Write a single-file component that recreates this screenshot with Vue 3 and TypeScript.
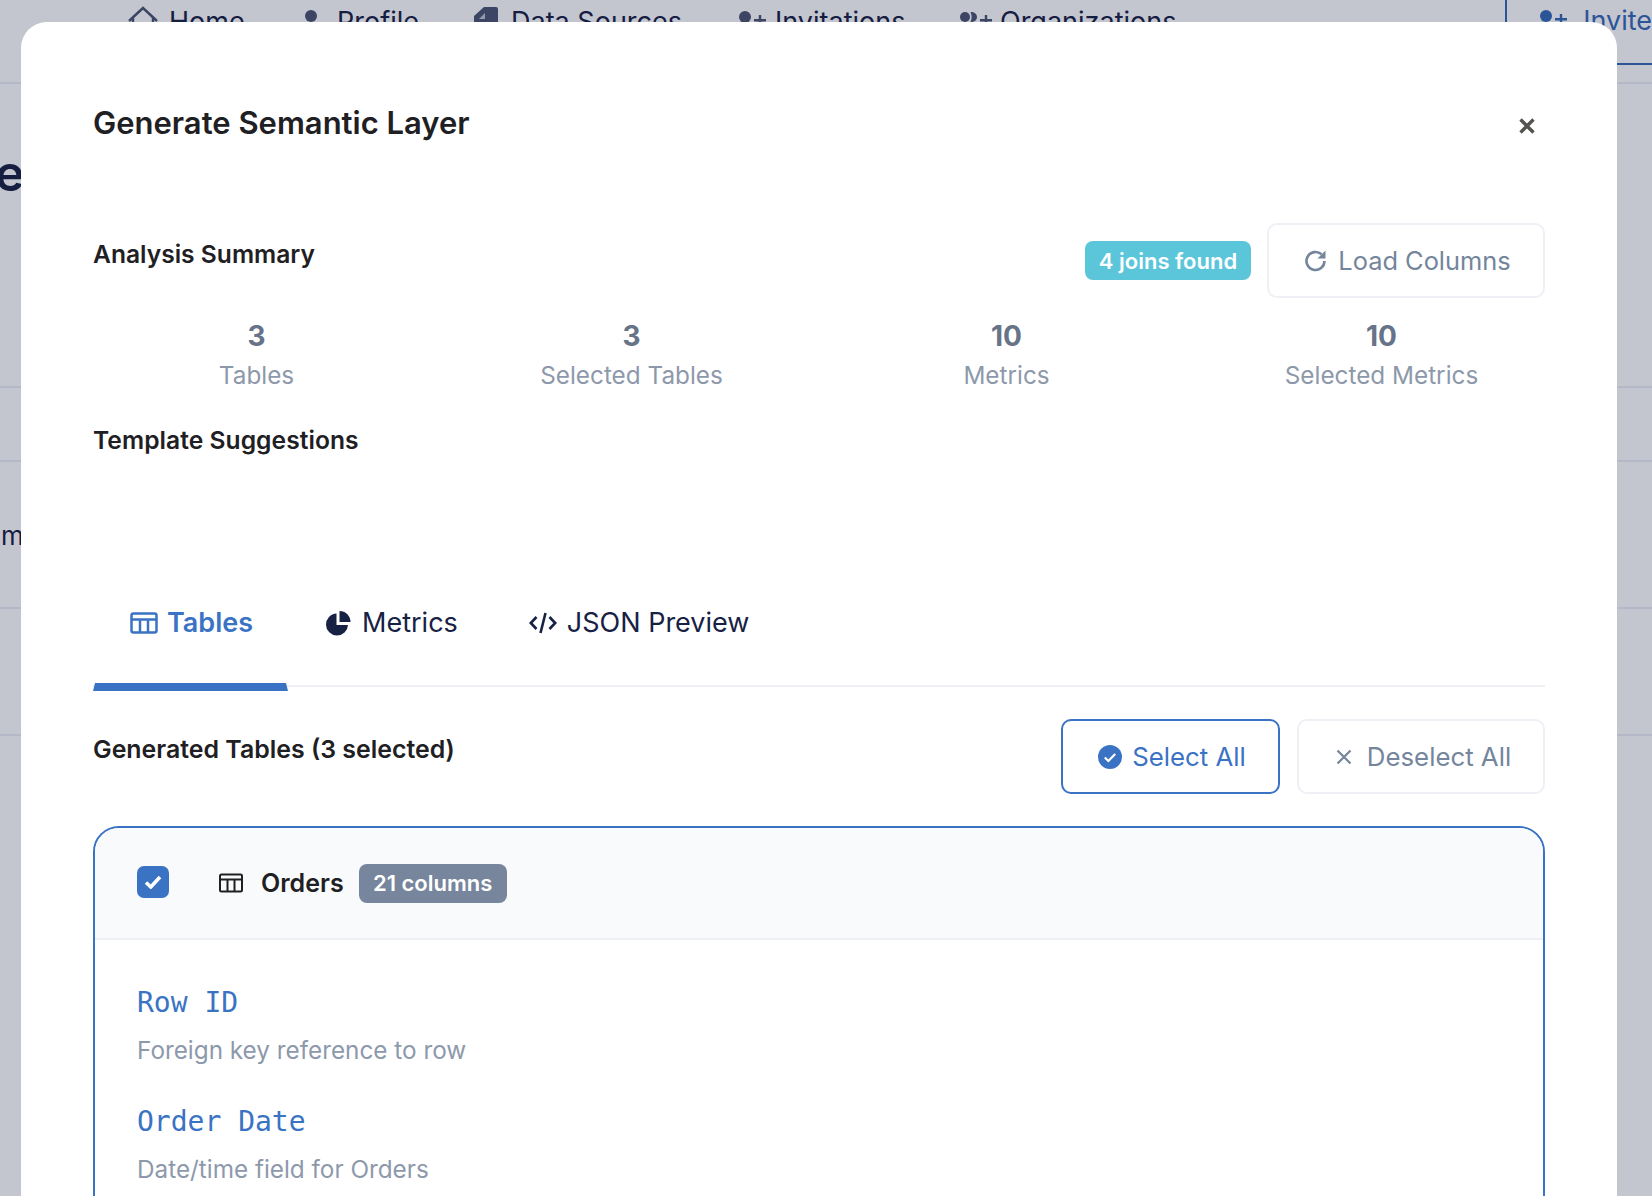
<script setup lang="ts">
interface Stat { value: number; label: string }
interface Field { name: string; desc: string }
const navItems: { label: string; icon: string }[] = [
  { label: 'Home', icon: 'home' },
  { label: 'Profile', icon: 'user' },
  { label: 'Data Sources', icon: 'doc' },
  { label: 'Invitations', icon: 'invite' },
  { label: 'Organizations', icon: 'org' },
]
const stats: Stat[] = [
  { value: 3, label: 'Tables' },
  { value: 3, label: 'Selected Tables' },
  { value: 10, label: 'Metrics' },
  { value: 10, label: 'Selected Metrics' },
]
const fields: Field[] = [
  { name: 'Row ID', desc: 'Foreign key reference to row' },
  { name: 'Order Date', desc: 'Date/time field for Orders' },
]
</script>

<template>
  <div class="page">
    <header class="topbar">
      <nav class="nav">
        <a v-for="item in navItems" :key="item.label" class="nav-item" :class="'nav-' + item.icon">
          <svg v-if="item.icon === 'home'" class="nav-ic" width="32" height="32" viewBox="0 0 32 32" fill="none" stroke="#4b5470" stroke-width="2.4"><path d="M2 16 16 3l14 13M6 13v16h20V13" /></svg>
          <svg v-else-if="item.icon === 'user'" class="nav-ic" width="16" height="32" viewBox="0 0 16 32" fill="#4b5470"><circle cx="8" cy="11" r="6" /></svg>
          <svg v-else-if="item.icon === 'doc'" class="nav-ic" width="24" height="32" viewBox="0 0 24 32" fill="#4b5470"><path d="M10 2h12a2 2 0 0 1 2 2v28H0V11z" /><path d="M11 8v6H5z" fill="#c3c5cf" /></svg>
          <svg v-else-if="item.icon === 'invite'" class="nav-ic" width="28" height="32" viewBox="0 0 28 32" fill="#4b5470"><circle cx="6" cy="12" r="6" /><path d="M15 14h12v2.400H15zM19.800 10h2.400v12h-2.400z" /></svg>
          <svg v-else class="nav-ic" width="32" height="32" viewBox="0 0 32 32" fill="#4b5470"><circle cx="5" cy="12" r="5" /><path d="M10.500 7c4 0 6.500 2 6.500 5s-2.500 5-6.500 5c1.500-3 1.500-7 0-10z" /><path d="M20 14h12v2.400H20zM24.800 10h2.400v12h-2.400z" /></svg>
          <span>{{ item.label }}</span>
        </a>
      </nav>
      <a class="invite">
        <svg width="28" height="32" viewBox="0 0 28 32" fill="#3569b5"><circle cx="6" cy="12" r="6" /><path d="M15 14h12v2.400H15zM19.800 10h2.400v12h-2.400z" /></svg>
        <span>Invite</span>
      </a>
    </header>
    <div class="bg-row bg-heading"><span>e</span></div>
    <div class="bg-row bg-b"></div>
    <div class="bg-row bg-m"><span>m</span></div>
    <div class="bg-row bg-d"></div>

    <div class="scrim"></div>

    <section class="modal">
      <div class="modal-head">
        <h2>Generate Semantic Layer</h2>
        <svg class="close" width="16" height="16" viewBox="0 0 16 16" fill="none" stroke="#55534f" stroke-width="3.400"><path d="M1.500 1.500l13 13M14.500 1.500l-13 13" /></svg>
      </div>

      <div class="summary-head">
        <h3>Analysis Summary</h3>
        <div class="summary-actions">
          <span class="badge badge-info">4 joins found</span>
          <button class="btn btn-load">
            <svg width="24" height="24" viewBox="0 0 24 24" fill="none"><path d="M20.500 12a9 9 0 1 1-3-6.700" stroke="#74859c" stroke-width="2.600" /><path d="M21.500 1.500v8h-8z" fill="#74859c" /></svg>
            Load Columns
          </button>
        </div>
      </div>

      <div class="stats">
        <div v-for="s in stats" :key="s.label" class="stat">
          <div class="stat-value">{{ s.value }}</div>
          <div class="stat-label">{{ s.label }}</div>
        </div>
      </div>

      <h3 class="suggest">Template Suggestions</h3>

      <div class="tabs">
        <a class="tab active">
          <svg width="28" height="24" viewBox="0 0 28 24" fill="none" stroke="#3a73c4" stroke-width="2.500"><rect x="1.500" y="2.500" width="25" height="19" rx="2" /><path d="M1.500 8.500h25M10 8.500v13M18 8.500v13" /></svg>
          Tables
        </a>
        <a class="tab tab-metrics">
          <svg width="26" height="26" viewBox="0 0 26 26" fill="#172144"><path d="M11.500 3.500A11 11 0 1 0 23 15H11.500z" /><path d="M14.500 1v11H25.500A11 11 0 0 0 14.500 1z" /></svg>
          Metrics
        </a>
        <a class="tab">
          <svg width="28" height="24" viewBox="0 0 28 24" fill="none" stroke="#172144" stroke-width="2.600"><path d="M7.500 6 1.800 12l5.700 6M20.500 6l5.700 6-5.700 6M16.500 2l-5 20" /></svg>
          JSON Preview
        </a>
      </div>

      <div class="generated-head">
        <h3>Generated Tables (3 selected)</h3>
        <div class="generated-actions">
          <button class="btn btn-select">
            <svg width="24" height="24" viewBox="0 0 24 24"><circle cx="12" cy="12" r="12" fill="#3a73c4" /><path d="M6.800 12.500l3.600 3.500 6.800-7" fill="none" stroke="#fff" stroke-width="2.200" /></svg>
            Select All
          </button>
          <button class="btn btn-deselect">
            <svg width="16" height="16" viewBox="0 0 16 16" fill="none" stroke="#74859c" stroke-width="2.200"><path d="M1.500 1.500l13 13M14.500 1.500l-13 13" /></svg>
            Deselect All
          </button>
        </div>
      </div>

      <article class="card">
        <div class="card-head">
          <span class="check">
            <svg width="18" height="14" viewBox="0 0 18 14" fill="none" stroke="#fff" stroke-width="3.600"><path d="M2 7.500l4.800 4.500L16 2" /></svg>
          </span>
          <svg class="card-ic" width="24" height="20" viewBox="0 0 24 20" fill="none" stroke="#1f2023" stroke-width="2"><rect x="1" y="1.500" width="22" height="17" rx="1.500" /><path d="M1 6.500h22M8.500 6.500v12M15.500 6.500v12" /></svg>
          <span class="card-title">Orders</span>
          <span class="badge badge-muted">21 columns</span>
        </div>
        <div class="card-body">
          <div v-for="f in fields" :key="f.name" class="field">
            <code>{{ f.name }}</code>
            <p>{{ f.desc }}</p>
          </div>
        </div>
      </article>
    </section>
  </div>
</template>

<style>
html, body { margin: 0; }
</style>

<style scoped>
.page { position: relative; width: 1652px; height: 1196px; overflow: hidden; background: #fff; font-family: Inter, "Noto Sans", sans-serif; color: #1f2023; }
.topbar { display: flex; height: 84px; box-sizing: border-box; border-bottom: 2px solid #eceef3; }
.nav { display: flex; padding-left: 127px; width: 1506px; box-sizing: border-box; }
.nav-item { display: flex; height: 42px; align-items: center; font-size: 27px; color: #16203f; gap: 10px; }
.nav-home { width: 176px; }
.nav-user { width: 171px; gap: 18px; }
.nav-doc { width: 265px; gap: 13px; }
.nav-invite { width: 221px; gap: 8px; }
.nav-org { gap: 8px; }
.nav-ic { flex: none; }
.invite { flex: 1; display: flex; align-items: center; gap: 15px; height: 65px; padding-bottom: 23px; box-sizing: border-box; padding-left: 33px; border-left: 2px solid #3569b5; border-bottom: 2px solid #3569b5; font-size: 27px; color: #3569b5; }
.bg-row { border-bottom: 2px solid #eceef3; box-sizing: border-box; overflow: hidden; }
.bg-row span { display: block; }
.bg-heading { height: 304px; padding-top: 58px; font-size: 50px; font-weight: 600; line-height: 62px; color: #16203f; }
.bg-heading span { margin-left: -5px; }
.bg-b { height: 74px; }
.bg-m { height: 147px; padding-top: 56px; padding-left: 1px; font-size: 26px; line-height: 36px; color: #16203f; }
.bg-d { height: 127px; }
.scrim { position: absolute; inset: 0; background: rgba(18, 26, 65, 0.253); }

.modal { position: absolute; left: 21px; top: 22px; width: 1596px; height: 1400px; box-sizing: border-box; padding: 0 72px; background: #fff; border-radius: 26px; }
.modal-head { display: flex; justify-content: space-between; align-items: center; height: 40px; padding-top: 81px; }
h2 { margin: 0; font-size: 31px; font-weight: 600; line-height: 40px; }
.close { margin-right: 10px; margin-top: 6px; }
h3 { margin: 0; font-size: 24.6px; font-weight: 600; line-height: 32px; color: #1f2023; }
.summary-head { display: flex; justify-content: space-between; margin-top: 80px; }
.summary-head h3 { margin-top: 15px; }
.summary-actions { display: flex; align-items: center; gap: 16px; }
.badge { display: inline-block; font-weight: 600; color: #fff; border-radius: 8px; box-sizing: border-box; text-align: center; }
.badge-info { width: 166px; height: 39px; line-height: 41px; font-size: 22px; background: #5bc6da; }
.btn { display: inline-flex; align-items: center; justify-content: center; gap: 10px; height: 75px; box-sizing: border-box; border: 2px solid #eff0f5; border-radius: 10px; background: #fff; font-family: inherit; font-size: 25.8px; color: #74859c; padding: 0; }
.btn-load { width: 278px; font-size: 25.4px; padding-left: 3px; }
.stats { display: grid; grid-template-columns: repeat(4, 1fr); margin: 18px -24px 0; }
.stat { text-align: center; }
.stat-value { font-size: 28px; font-weight: 700; line-height: 40px; color: #667388; }
.stat-label { font-size: 24.3px; line-height: 38px; color: #8d99ab; }
.suggest { margin-top: 30px; letter-spacing: 0.05px; }
.tabs { display: flex; margin-top: 135px; border-bottom: 2px solid #eff0f5; height: 94px; }
.tab { display: flex; align-items: center; justify-content: center; gap: 10px; height: 100px; box-sizing: border-box; padding: 0 33px 31px 34px; font-size: 27px; color: #172144; border: 2px solid transparent; border-bottom-width: 8px; }
.tab.active { color: #3a73c4; font-weight: 600; border-bottom-color: #3a73c4; padding-left: 35px; gap: 9px; }
.tab-metrics { gap: 11px; padding-left: 35px; }
.generated-head { display: flex; justify-content: space-between; margin-top: 32px; }
.generated-head h3 { margin-top: 14px; font-size: 24.9px; }
.generated-actions { display: flex; gap: 17px; }
.btn-select { width: 219px; border-color: #3a73c4; color: #3a73c4; padding-left: 3px; }
.btn-deselect { width: 248px; gap: 15px; padding-left: 5px; }
.card { margin-top: 32px; border: 2px solid #3a73c4; border-radius: 26px; overflow: hidden; }
.card-head { display: flex; align-items: center; height: 112px; box-sizing: border-box; padding-left: 42px; background: #f9fafc; border-bottom: 2px solid #eff0f5; }
.check { display: flex; align-items: center; justify-content: center; width: 32px; height: 32px; background: #3a73c4; border-radius: 7px; margin: -2px 50px 0 0; }
.card-ic { margin-right: 18px; }
.card-title { font-size: 25px; font-weight: 600; margin-right: 15px; }
.badge-muted { width: 148px; height: 39px; line-height: 39px; font-size: 22px; background: #77869c; }
.card-body { padding: 42px 42px; }
.field { margin-bottom: 32px; }
code { display: block; font-family: "DejaVu Sans Mono", monospace; font-size: 28px; line-height: 42px; color: #3a73c4; }
p { margin: 7px 0 0; font-size: 24.3px; line-height: 38px; color: #8d99ab; }
</style>
